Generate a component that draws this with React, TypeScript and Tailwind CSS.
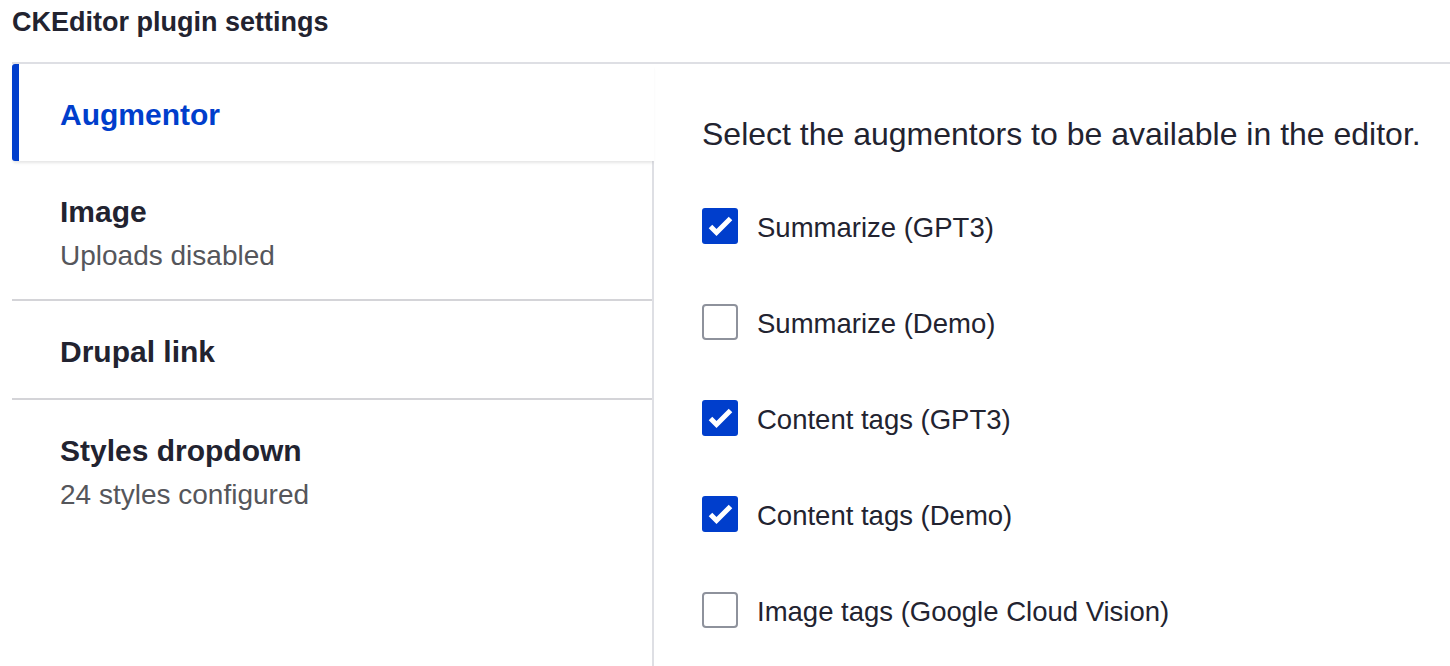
import React from "react";

type Tab = { title: string; summary?: string; active?: boolean };

const tabs: Tab[] = [
  { title: "Augmentor", active: true },
  { title: "Image", summary: "Uploads disabled" },
  { title: "Drupal link" },
  { title: "Styles dropdown", summary: "24 styles configured" },
];

const options = [
  { label: "Summarize (GPT3)", checked: true },
  { label: "Summarize (Demo)", checked: false },
  { label: "Content tags (GPT3)", checked: true },
  { label: "Content tags (Demo)", checked: true },
  { label: "Image tags (Google Cloud Vision)", checked: false },
];

const Checkbox = ({ checked }: { checked: boolean }) =>
  checked ? (
    <span className="flex h-[36px] w-[36px] shrink-0 items-center justify-center rounded-[3px] bg-[#003ecc]">
      <svg width="36" height="36" viewBox="0 0 36 36" fill="none">
        <path d="M8.5 18.5L14.5 24.5L28.5 10.5" stroke="#fff" strokeWidth="5" />
      </svg>
    </span>
  ) : (
    <span className="h-[36px] w-[36px] shrink-0 rounded-[4px] border-2 border-[#8e929c] bg-white" />
  );

const App = () => {
  return (
    <div className="h-screen overflow-hidden bg-white text-[#222330] font-['Liberation_Sans',Arial,sans-serif]">
      <div className="h-[62px] pl-3 pt-[4px]">
        <h2 className="text-[27px] font-bold leading-[36px]">CKEditor plugin settings</h2>
      </div>

      <div className="ml-3 flex h-full border-t-2 border-[#dedfe4]">
        <ul className="w-[642px] shrink-0 border-r-2 border-[#dedfe4]">
          {tabs.map((tab) =>
            tab.active ? (
              <li
                key={tab.title}
                className="relative z-10 -mr-[2px] h-[97px] rounded-l-[3px] border-l-[7px] border-[#003ecc] bg-white pl-[41px] pt-[33px] shadow-[0_3px_3px_-1px_rgba(0,0,0,0.1)]"
              >
                <span className="text-[30px] font-bold leading-[36px] text-[#003ecc]">{tab.title}</span>
              </li>
            ) : (
              <li
                key={tab.title}
                className={`pl-[48px] pt-[33px] ${
                  tab.title === "Styles dropdown"
                    ? ""
                    : tab.summary
                    ? "h-[140px] border-b-2 border-[#d4d4d8]"
                    : "h-[99px] border-b-2 border-[#d4d4d8]"
                }`}
              >
                <div className="text-[30px] font-bold leading-[36px]">{tab.title}</div>
                {tab.summary && (
                  <div className="mt-[8px] text-[28px] leading-[36px] text-[#55565b]">{tab.summary}</div>
                )}
              </li>
            )
          )}
        </ul>

        <div className="flex-1 pl-[48px] pt-[50px]">
          <p className="text-[32px] leading-[40px]">Select the augmentors to be available in the editor.</p>
          <div className="mt-[54px] flex flex-col gap-[58px]">
            {options.map((o) => (
              <label key={o.label} className="flex items-start gap-[19px]">
                <Checkbox checked={o.checked} />
                <span className="mt-[2px] text-[27.5px] leading-[36px]">{o.label}</span>
              </label>
            ))}
          </div>
        </div>
      </div>
    </div>
  );
};

export default App;
